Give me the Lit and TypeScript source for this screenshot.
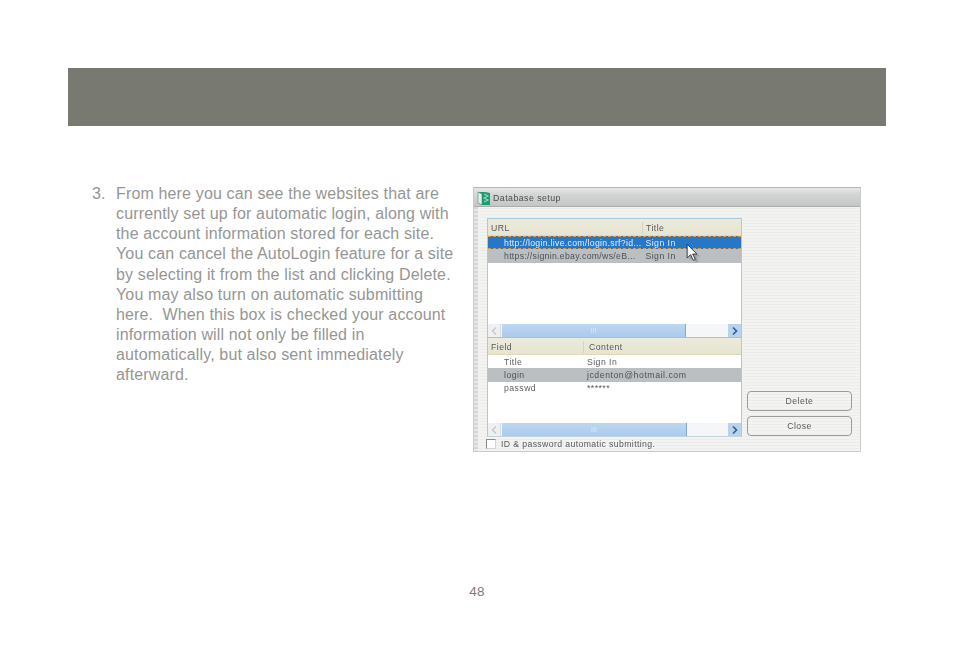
import { LitElement, html, css, svg } from "lit";
import { customElement } from "lit/decorators.js";

const LINES = [
  "From here you can see the websites that are",
  "currently set up for automatic login, along with",
  "the account information stored for each site.",
  "You can cancel the AutoLogin feature for a site",
  "by selecting it from the list and clicking Delete.",
  "You may also turn on automatic submitting",
  "here.  When this box is checked your account",
  "information will not only be filled in",
  "automatically, but also sent immediately",
  "afterward.",
];

const scrollbar = (thumbWidth: number) => html`
  <div class="sb">
    <div class="sb-btn back"><svg width="6" height="8" viewBox="0 0 6 8"><path d="M5 0.5 1.5 4 5 7.5" fill="none" stroke="#c4c8cc" stroke-width="1.4"/></svg></div>
    <div class="sb-thumb" style="width:${thumbWidth}px"><span>III</span></div>
    <div class="sb-track"></div>
    <div class="sb-btn next"><svg width="6" height="8" viewBox="0 0 6 8"><path d="M1 0.5 4.5 4 1 7.5" fill="none" stroke="#2f5f9c" stroke-width="1.6"/></svg></div>
  </div>`;

@customElement("app-root")
export class AppRoot extends LitElement {
  static styles = css`
    :host { display: block; width: 954px; height: 665px; background: #fff; overflow: hidden; font-family: "Liberation Sans", Arial, sans-serif; }
    .page { display: flex; flex-direction: column; height: 665px; padding: 68px 68px 0; box-sizing: border-box; }
    .banner { height: 58px; background: #787a72; flex: none; }
    .content { display: flex; padding-top: 58px; height: 395px; box-sizing: border-box; flex: none; }
    .textcol { width: 405px; display: flex; padding: 0 0 0 24px; box-sizing: border-box; color: #959694; font-size: 16px; line-height: 20.15px; letter-spacing: 0.15px; white-space: pre; flex: none; }
    .num { width: 24px; flex: none; }
    .winwrap { padding-top: 3px; }
    .win { width: 388px; height: 265px; box-sizing: border-box; display: flex; flex-direction: column; border: 1px solid #c9cbca; border-top-color: #b4b6b5; background: repeating-linear-gradient(180deg, #f3f3f1 0 2px, #ececea 2px 3px); position: relative; font-size: 8.7px; letter-spacing: 0.45px; color: #5c5f61; overflow: hidden; filter: blur(0.25px); }
    .title { height: 19px; flex: none; display: flex; align-items: center; gap: 2px; padding: 2px 0 0 3px; box-sizing: border-box; background: linear-gradient(180deg, #e6e8e7 0%, #d4d6d5 35%, #c3c6c5 100%); border-bottom: 1px solid #a9acab; color: #4a4d4e; font-size: 8.8px; }
    .body { flex: 1; display: flex; padding: 11px 8px 0 13px; min-height: 0; background: repeating-linear-gradient(180deg, #d6d7d6 0 2px, #e6e7e6 2px 4px) left / 4px 100% no-repeat; }
    .col { width: 256px; flex: none; display: flex; flex-direction: column; }
    .panel { border: 1px solid #a9cbde; border-bottom: none; background: #fff; width: 255px; box-sizing: border-box; display: flex; flex-direction: column; }
    .panel.a { height: 119px; }
    .panel.b { height: 100px; border-top: 1px solid #9fc4d8; border-bottom: 1px solid #c3d3dd; }
    .list { flex: 1; position: relative; min-height: 0; }
    .head { height: 17px; flex: none; display: flex; align-items: center; padding-top: 2px; background: linear-gradient(180deg, #ecebdc, #e6e5d1); border-bottom: 1px solid #e0d9b8; box-sizing: border-box; color: #55585a; }
    .h1 { padding-left: 3px; box-sizing: border-box; border-right: 1px solid #d5d4c4; height: 12px; line-height: 12px; flex: none; }
    .h2 { height: 12px; line-height: 12px; }
    .a .h1 { width: 155px; }
    .a .h2 { padding-left: 3px; }
    .b .h1 { width: 96px; }
    .b .h2 { padding-left: 5px; }
    .row { height: 13.4px; display: flex; align-items: center; box-sizing: border-box; white-space: nowrap; }
    .row .c1 { padding-left: 16px; box-sizing: border-box; flex: none; }
    .a .c1 { width: 157.5px; letter-spacing: 0.31px; }
    .b .c1 { width: 99px; }
    .wide { letter-spacing: 0.55px; }
    .sel { background: #2777c6; color: #e6eef7; border-top: 1px dashed #d99a45; border-bottom: 1px dashed #d99a45; }
    .gray { background: #bcbfc2; color: #4d5154; }
    .sb { height: 13px; flex: none; display: flex; align-items: stretch; background: #f5f6f7; }
    .sb-btn { width: 13px; flex: none; display: flex; align-items: center; justify-content: center; box-sizing: border-box; }
    .sb-btn.back { background: #eef0f1; border-right: 1px solid #d5dde3; }
    .sb-btn.next { background: #b9d3ec; }
    .sb-thumb { flex: none; margin-left: 1px; background: linear-gradient(180deg, #bcd7f2, #abcbeb); border-right: 1px solid #7fa9d1; display: flex; align-items: center; justify-content: center; box-sizing: border-box; color: #dbe9f6; font-size: 7px; letter-spacing: 0; }
    .sb-track { flex: 1; }
    .chk { display: flex; align-items: center; gap: 5px; height: 11px; margin-top: 1px; margin-left: -1px; color: #575a5c; letter-spacing: 0.38px; }
    .box { width: 10px; height: 10px; background: #fff; border: 1px solid #8a8d8c; border-right-color: #d5d5d3; border-bottom-color: #d5d5d3; flex: none; box-sizing: border-box; }
    .side { flex: 1; display: flex; flex-direction: column; justify-content: flex-end; gap: 5px; padding: 0 0 15px 4px; box-sizing: border-box; }
    .btn { width: 105px; height: 20px; flex: none; box-sizing: border-box; border: 1px solid #9a9c9c; border-radius: 4px; display: flex; align-items: center; justify-content: center; color: #55585a; }
    .cursor { position: absolute; left: 198px; top: 7px; }
    .foot { flex: 1; display: flex; justify-content: center; padding-top: 63px; box-sizing: border-box; }
    .pagenum { color: #7b7c7a; font-size: 13.5px; line-height: 16px; letter-spacing: 0.2px; }
  `;

  render() {
    return html`<div class="page">
      <div class="banner"></div>
      <div class="content">
        <div class="textcol"><div class="num">3.</div><div>${LINES.map((l) => html`<div>${l}</div>`)}</div></div>
        <div class="winwrap">
          <div class="win">
            <div class="title">
              <svg width="14" height="15" viewBox="0 0 14 15">
                ${svg`<path d="M1 1h7l5 1v12H6L1 12z" fill="#1f9a72"/><path d="M1 1l4 2v11L1 12z" fill="#dff0e9" stroke="#2b7f62" stroke-width=".5"/><path d="M7 3l4 2-4 2 4 2-4 2" fill="none" stroke="#8fdcbc" stroke-width="1.1"/>`}
              </svg>
              <span>Database setup</span>
            </div>
            <div class="body">
              <div class="col">
                <div class="panel a">
                  <div class="head"><div class="h1">URL</div><div class="h2">Title</div></div>
                  <div class="list">
                    <div class="row sel"><div class="c1">http://login.live.com/login.srf?id...</div><div>Sign In</div></div>
                    <div class="row gray"><div class="c1">https://signin.ebay.com/ws/eB...</div><div>Sign In</div></div>
                    <svg class="cursor" width="15" height="21" viewBox="0 0 13 18">
                      ${svg`<path d="M3 3v12l3-2.500 2.500 4.500 2.500-1-2-4.500h3.500z" fill="#8a8d90" opacity=".6"/><path d="M1 1v12l3-3 2.300 5 1.800-.9L5.800 9.500H9.500z" fill="#fff" stroke="#2a2c2e" stroke-width=".8"/>`}
                    </svg>
                  </div>
                  ${scrollbar(184)}
                </div>
                <div class="panel b">
                  <div class="head"><div class="h1">Field</div><div class="h2">Content</div></div>
                  <div class="list">
                    <div class="row"><div class="c1">Title</div><div>Sign In</div></div>
                    <div class="row gray"><div class="c1">login</div><div class="wide">jcdenton@hotmail.com</div></div>
                    <div class="row"><div class="c1">passwd</div><div>******</div></div>
                  </div>
                  ${scrollbar(185)}
                </div>
                <div class="chk"><div class="box"></div><span>ID &amp; password automatic submitting.</span></div>
              </div>
              <div class="side">
                <div class="btn">Delete</div>
                <div class="btn">Close</div>
              </div>
            </div>
          </div>
        </div>
      </div>
      <div class="foot"><div class="pagenum">48</div></div>
    </div>`;
  }
}
